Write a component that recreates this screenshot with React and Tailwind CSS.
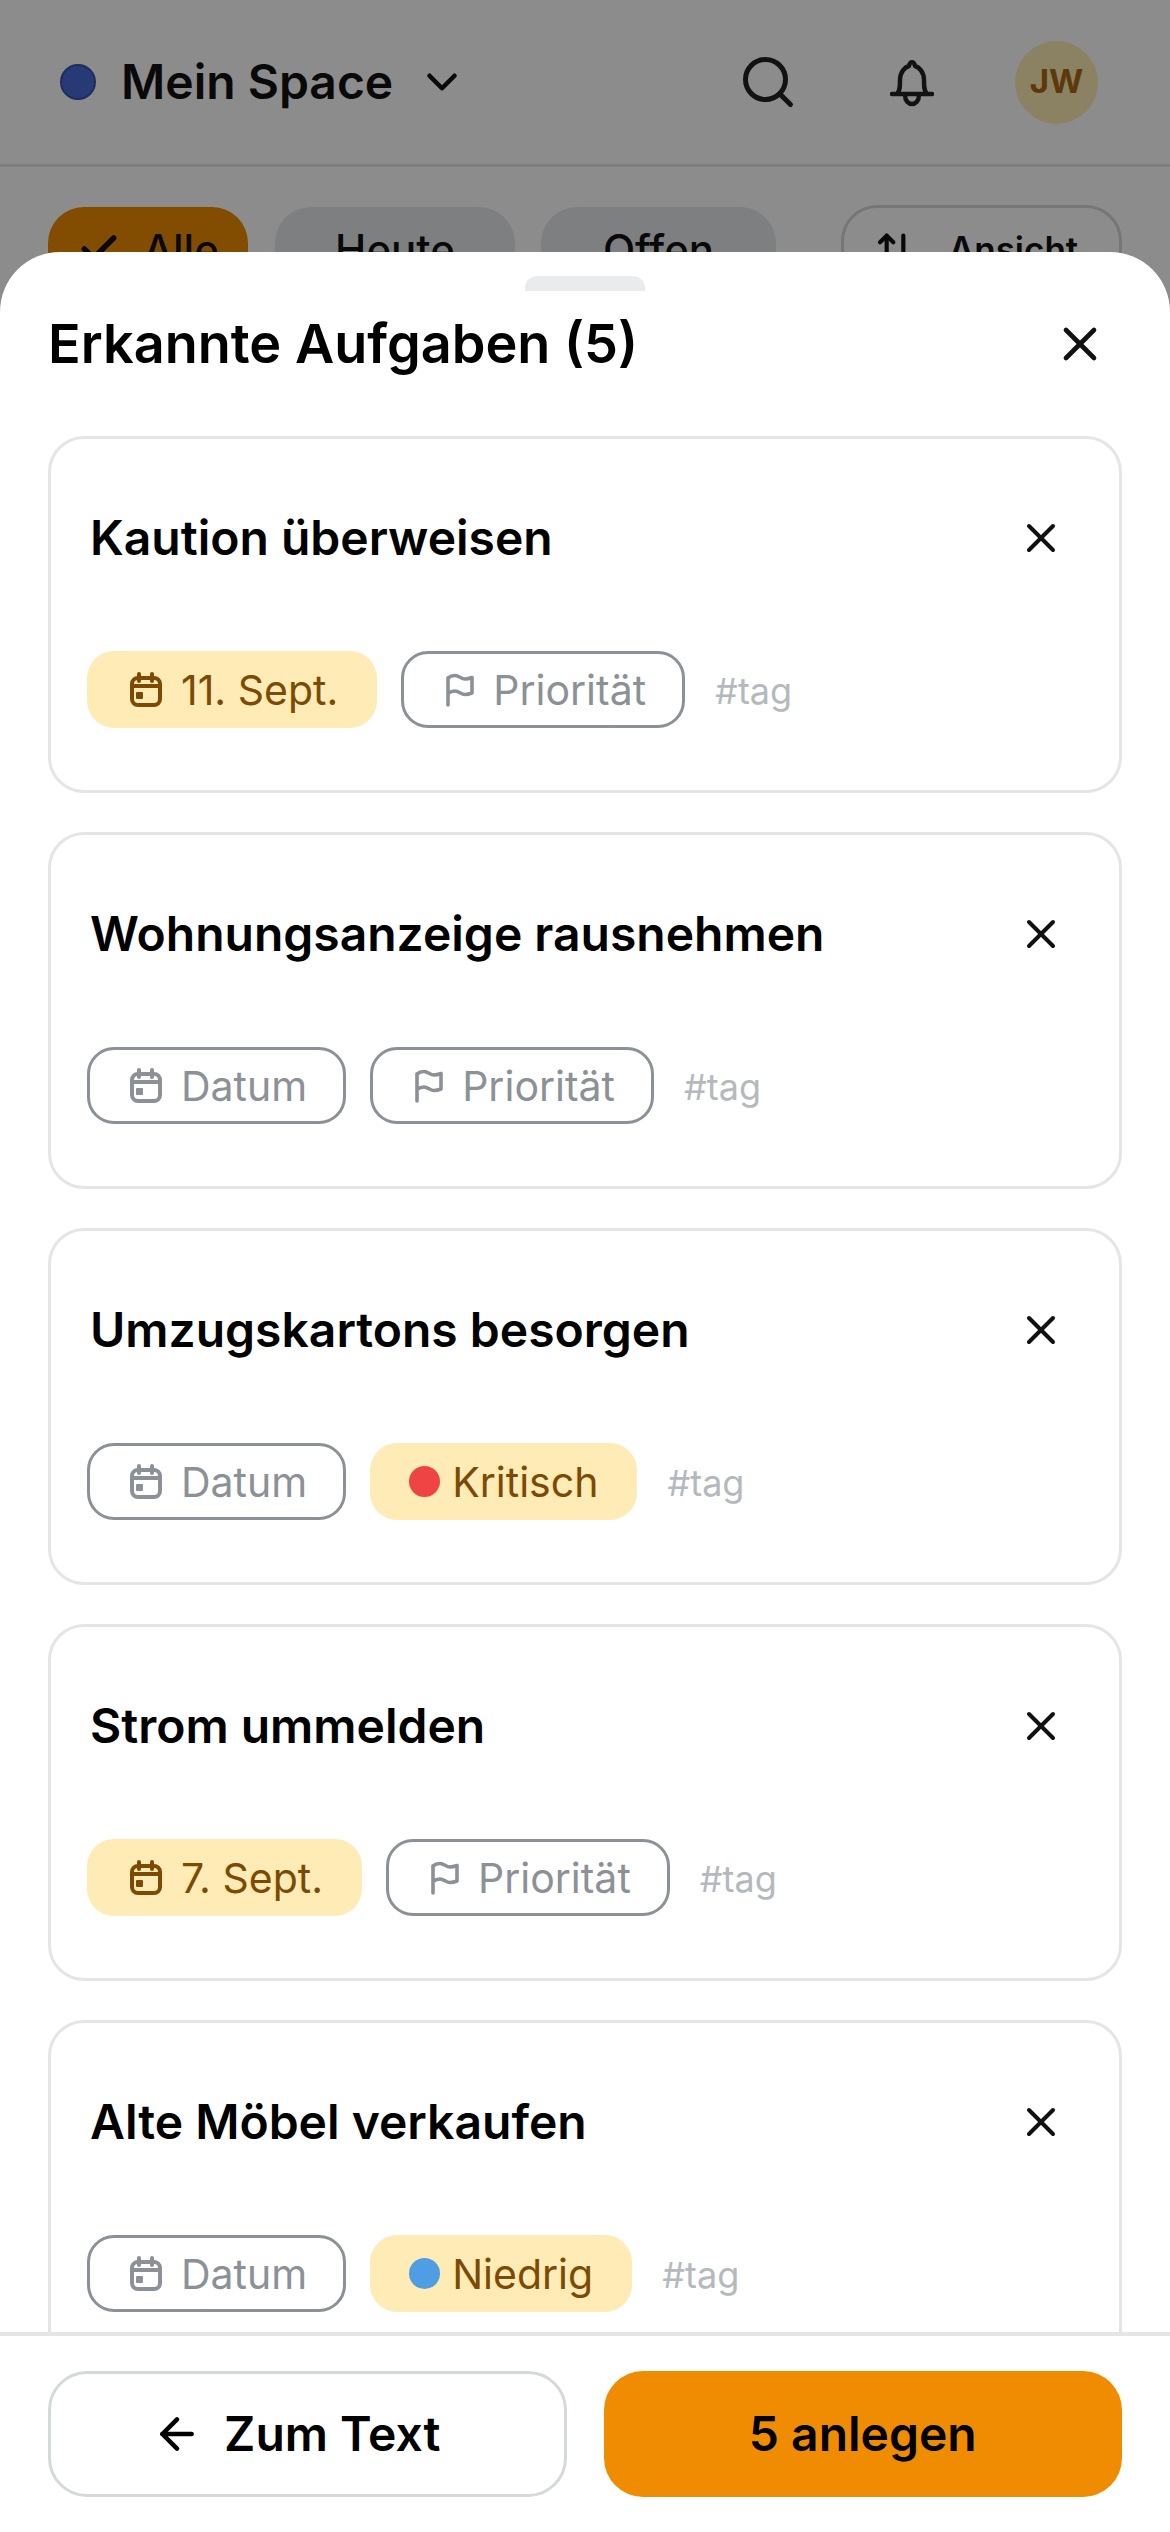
import React from 'react';
import { Search, ChevronDown, X, Check, ArrowLeft, ArrowUpDown } from 'lucide-react';

const tasks = [
  { title: 'Kaution überweisen', date: '11. Sept.', prio: null },
  { title: 'Wohnungsanzeige rausnehmen', date: null, prio: null },
  { title: 'Umzugskartons besorgen', date: null, prio: { label: 'Kritisch', dot: 'bg-[#ef4444]' } },
  { title: 'Strom ummelden', date: '7. Sept.', prio: null },
  { title: 'Alte Möbel verkaufen', date: null, prio: { label: 'Niedrig', dot: 'bg-[#4f9ee3]' } },
];

const CalendarIcon = ({ className }) => (
  <svg viewBox="0 0 32 35" fill="none" stroke="currentColor" strokeWidth="4" strokeLinecap="round" strokeLinejoin="round" className={className}>
    <rect x="2" y="6" width="28" height="27" rx="6" />
    <path d="M9 2v7M22 2v7M2 14h28" />
    <rect x="6" y="20" width="7" height="7" rx="1" fill="currentColor" stroke="none" />
  </svg>
);

const FlagIcon = ({ className }) => (
  <svg viewBox="0 0 28 34" fill="none" stroke="currentColor" strokeWidth="3.6" strokeLinecap="round" strokeLinejoin="round" className={className}>
    <path d="M2 32V5s3-2.5 7-2.5 6 3.5 10 3.5c3 0 7-1.5 7-1.5V20s-4 1.5-7 1.5c-4 0-6-3.5-10-3.5s-7 2.5-7 2.5" />
  </svg>
);

const BellIcon = ({ className }) => (
  <svg viewBox="0 0 44 50" fill="none" stroke="currentColor" strokeWidth="4.4" strokeLinecap="round" strokeLinejoin="round" className={className}>
    <path d="M2 37h40M7 37c3-3 3-7 3-14 0-8 5-13 9-14 1-5 5-5 6 0 4 1 9 6 9 14 0 7 0 11 3 14" />
    <path d="M15 38c0 12 14 12 14 0" />
  </svg>
);

const Chip = ({ children, className }) => (
  <div className={`flex items-center justify-center rounded-[36px] font-medium shrink-0 ${className}`}>
    {children}
  </div>
);

const Pill = ({ active, children }) => (
  <div
    className={`h-[77px] pl-[40px] pr-[36px] pt-[2px] flex items-center gap-[19px] rounded-[27px] border-[3px] text-[41px] leading-none shrink-0 ${
      active ? 'bg-[#feebb5] border-transparent text-[#7c4a03]' : 'border-[#8b9196] text-[#8b9196]'
    }`}
  >
    {children}
  </div>
);

const TaskCard = ({ task }) => (
  <div className="h-[357px] shrink-0 rounded-[36px] border-[3px] border-[#e3e5e7] pl-[36px] pr-[36px] pt-[70px]">
    <div className="flex items-center justify-between pl-[3px] pr-[18px]">
      <div className="text-[48px] leading-[58px] font-semibold text-black">{task.title}</div>
      <X className="w-[48px] h-[48px] text-[#111]" strokeWidth={2} />
    </div>
    <div className="mt-[84px] flex items-center gap-[24px]">
      <Pill active={!!task.date}>
        <CalendarIcon className="w-[32px] h-[35px] -mt-[2px]" />
        {task.date || 'Datum'}
      </Pill>
      <Pill active={!!task.prio}>
        {task.prio ? (
          <span className={`-ml-[4px] -mr-[7px] -mt-[2px] w-[31px] h-[31px] rounded-full ${task.prio.dot}`} />
        ) : (
          <FlagIcon className="ml-[2px] w-[28px] h-[34px] -mt-[2px]" />
        )}
        {task.prio ? task.prio.label : 'Priorität'}
      </Pill>
      <span className="ml-[6px] text-[36px] leading-none text-[#b4b9bd] pt-[3px]">#tag</span>
    </div>
  </div>
);

export default function App() {
  return (
    <div className="relative w-[1170px] h-[2532px] overflow-hidden bg-white font-['Inter',sans-serif]">
      {/* page behind the sheet */}
      <header className="h-[167px] flex items-center pl-[60px] pr-[72px] border-b-[3px] border-[#e3e5e7]">
        <span className="w-[36px] h-[36px] rounded-full bg-[#4a6bd8] border-[2px] border-[#3552b0]" />
        <span className="ml-[25px] text-[48px] font-semibold text-[#111]">Mein Space</span>
        <ChevronDown className="ml-[24px] w-[50px] h-[50px] text-[#111]" strokeWidth={2.2} />
        <Search className="ml-auto w-[60px] h-[60px] text-[#222]" strokeWidth={2} />
        <BellIcon className="ml-[92px] w-[44px] h-[50px] text-[#222]" />
        <div className="ml-[81px] w-[83px] h-[83px] rounded-full bg-[#feebb5] flex items-center justify-center text-[33px] font-bold text-[#a86a10]">
          JW
        </div>
      </header>
      <div className="mt-[38px] px-[48px] flex items-center">
        <Chip className="h-[84px] w-[200px] gap-[22px] text-[42px] bg-[#ef8c02] text-[#111]">
          <Check className="w-[44px] h-[44px]" strokeWidth={3} />
          Alle
        </Chip>
        <Chip className="h-[84px] ml-[27px] w-[240px] text-[42px] bg-[#e5e8ea] text-[#111]">Heute</Chip>
        <Chip className="h-[84px] ml-[26px] w-[235px] text-[42px] bg-[#e5e8ea] text-[#111]">Offen</Chip>
        <Chip className="h-[88px] ml-auto w-[281px] pr-[10px] gap-[34px] border-[3px] border-[#d5d8db] text-[35px] text-[#111]">
          <ArrowUpDown className="w-[40px] h-[40px]" strokeWidth={2.5} />
          <span className="font-semibold">Ansicht</span>
        </Chip>
      </div>

      {/* dim layer */}
      <div className="absolute inset-0 bg-black/45" />

      {/* bottom sheet */}
      <div className="absolute left-0 right-0 bottom-0 top-[252px] bg-white rounded-t-[60px] flex flex-col overflow-hidden">
        <div className="h-[15px] mt-[24px] w-[120px] mx-auto shrink-0 rounded-t-[12px] bg-[#e9ebec]" />
        <div className="shrink-0 flex items-center justify-between pl-[48px] pr-[62px] mt-[22px] h-[62px]">
          <h1 className="text-[54px] leading-none font-semibold text-black">Erkannte Aufgaben (5)</h1>
          <X className="w-[56px] h-[56px] text-[#111]" strokeWidth={2} />
        </div>
        <div className="flex-1 min-h-0 overflow-hidden px-[48px] pt-[61px] flex flex-col gap-[39px]">
          {tasks.map((task) => (
            <TaskCard key={task.title} task={task} />
          ))}
        </div>
        <div className="shrink-0 h-[200px] border-t-[4px] border-[#e3e5e7] bg-white px-[48px] pt-[35px] grid grid-cols-2 gap-[37px] items-start">
          <button className="h-[126px] rounded-[39px] border-[3px] border-[#d5d9dc] pr-[22px] flex items-center justify-center gap-[22px] text-[48px] font-semibold text-black">
            <ArrowLeft className="w-[50px] h-[50px]" strokeWidth={2.2} />
            Zum Text
          </button>
          <button className="h-[126px] rounded-[39px] bg-[#ef8c02] text-[48px] font-semibold text-black">5 anlegen</button>
        </div>
      </div>
    </div>
  );
}
